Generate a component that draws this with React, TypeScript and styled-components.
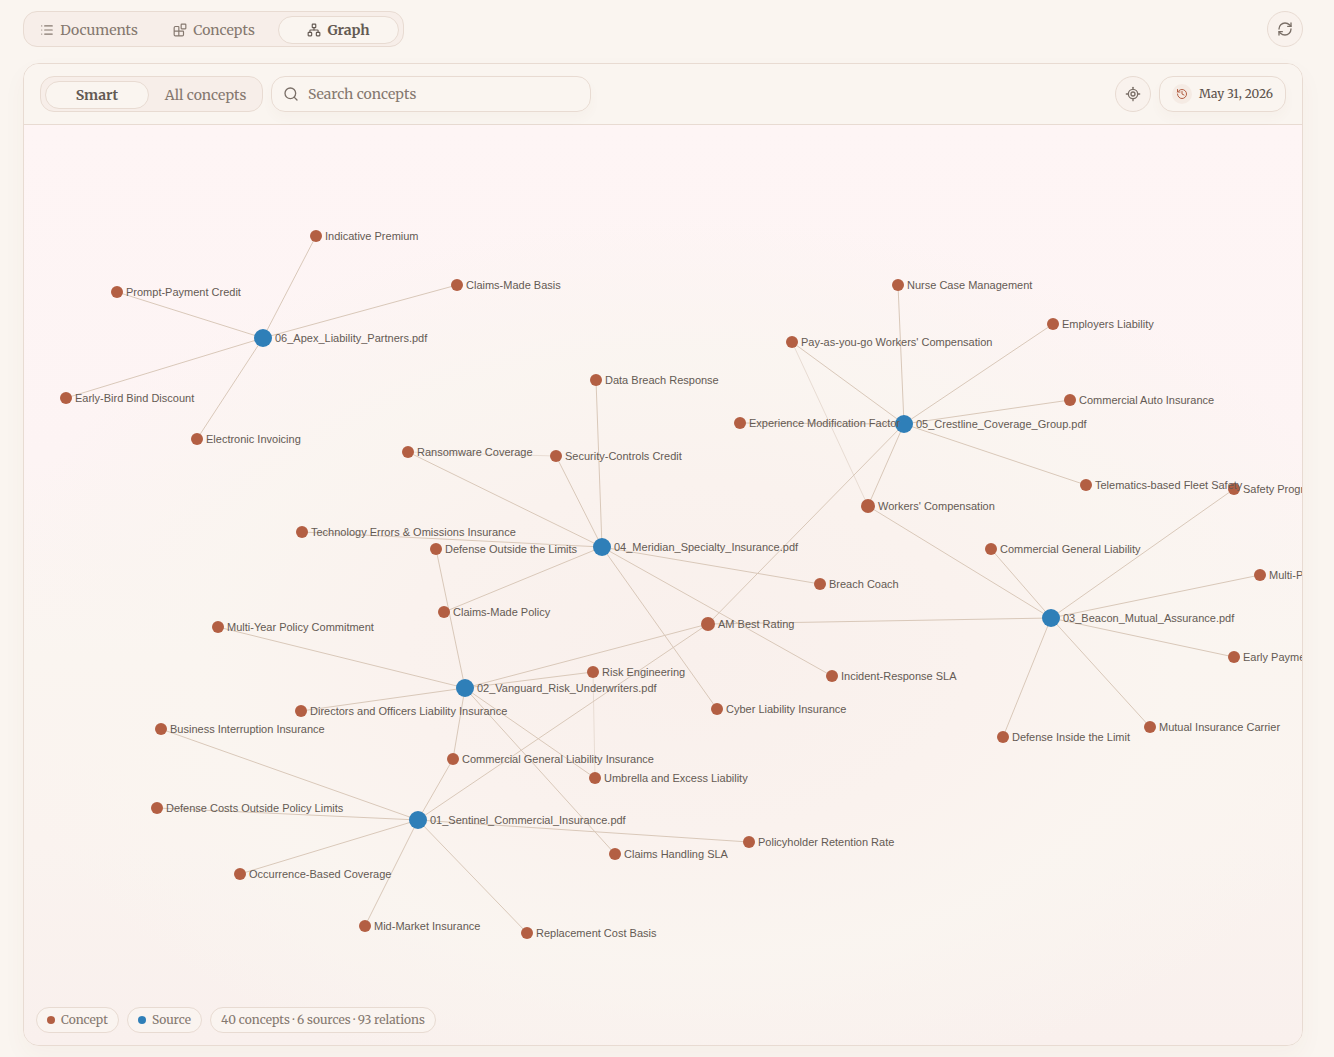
import React, { useId } from "react";
import styled, { createGlobalStyle, css } from "styled-components";
import { List, Blocks, Network, RefreshCw, Search, LocateFixed, History } from "lucide-react";

const serif = `Merriweather, "DejaVu Serif Condensed", "DejaVu Serif", serif`;

const GlobalStyle = createGlobalStyle`
  *, *::before, *::after { box-sizing: border-box; }
  html, body { margin: 0; height: 100%; }
  #root { height: 100%; }
  body {
    background: #faf5f0;
    color: #5c524b;
    font-family: ${serif};
    overflow: hidden;
  }
  button, input { font: inherit; color: inherit; margin: 0; }
`;

const Page = styled.main`
  display: flex;
  flex-direction: column;
  gap: 16px;
  height: 100vh;
  padding: 11px 31px 11px 23px;
`;

const TopBar = styled.header`
  display: flex;
  align-items: center;
  justify-content: space-between;
`;

const Segments = styled.nav`
  display: flex;
  align-items: center;
  gap: 4px;
  height: 36px;
  padding: 5px 4px 3px;
  border: 1px solid #e8dbd2;
  border-radius: 14px;
  background: #f7eee9;
`;

const Segment = styled.button<{ $active?: boolean; $width: number }>`
  display: flex;
  align-items: center;
  justify-content: center;
  gap: 6px;
  width: ${(p) => p.$width}px;
  height: 28px;
  padding: 0;
  border: 1px solid transparent;
  border-radius: 14px;
  background: transparent;
  color: #85786f;
  font-size: 14px;
  line-height: 20px;
  white-space: nowrap;
  cursor: pointer;
  ${(p) =>
    p.$active &&
    css`
      border-color: #e8dbd2;
      background: #faf5f0;
      color: #645a53;
      font-weight: 700;
    `}
`;

const RoundButton = styled.button`
  display: grid;
  place-items: center;
  width: 36px;
  height: 36px;
  padding: 0;
  border: 1px solid #e8dbd2;
  border-radius: 50%;
  background: #f9f2ed;
  color: #7a6f67;
  cursor: pointer;
`;

const Panel = styled.section`
  display: flex;
  flex: 1;
  flex-direction: column;
  min-height: 0;
  overflow: hidden;
  border: 1px solid #e8dbd2;
  border-radius: 16px;
  box-shadow: 0 10px 24px rgba(120, 80, 50, 0.04);
`;

const Toolbar = styled.div`
  display: flex;
  align-items: center;
  gap: 8px;
  padding: 12px 16px;
  border-bottom: 1px solid #e8dbd2;
  background: #faf5f0;
`;

const SearchBox = styled.label`
  display: flex;
  align-items: center;
  gap: 9px;
  width: 320px;
  height: 36px;
  margin-right: auto;
  padding: 0 11px;
  border: 1px solid #e8dbd2;
  border-radius: 14px;
  box-shadow: 0 6px 12px rgba(120, 80, 50, 0.03);
  color: #7a6f67;
`;

const SearchInput = styled.input`
  flex: 1;
  min-width: 0;
  padding: 0;
  border: 0;
  outline: 0;
  background: transparent;
  font-size: 14px;
  line-height: 20px;
  &::placeholder { color: #85786f; opacity: 1; }
`;

const DateButton = styled.button`
  display: flex;
  align-items: center;
  gap: 7px;
  height: 36px;
  padding: 0 12px;
  border: 1px solid #e8dbd2;
  border-radius: 14px;
  background: #faf5f0;
  box-shadow: 0 6px 12px rgba(120, 80, 50, 0.03);
  font-size: 12px;
  line-height: 20px;
  white-space: nowrap;
  cursor: pointer;
`;

const DateIcon = styled.span`
  display: grid;
  place-items: center;
  width: 20px;
  height: 20px;
  border-radius: 50%;
  background: #f5ebe4;
  color: #b35f43;
`;

const Canvas = styled.div`
  position: relative;
  flex: 1;
  min-height: 0;
  overflow: hidden;
  background:
    radial-gradient(ellipse 56% 48% at 52% 58%, #f9f0ec 0%, #faf2ee 40%, rgba(250, 245, 240, 0.9) 68%, rgba(250, 245, 240, 0) 100%),
    linear-gradient(180deg, #fef5f5 0%, #fdf4f4 36%, #faf5f0 58%, #faf3ef 78%, #f9f0ed 100%);
`;

const GraphSvg = styled.svg`
  display: block;
  width: 100%;
  height: 100%;
`;

const Edge = styled.line<{ $faint?: boolean }>`
  stroke: ${(p) => (p.$faint ? "#e8dcd3" : "#d9c8b9")};
  stroke-width: 1;
`;

const Dot = styled.circle<{ $source?: boolean }>`
  fill: ${(p) => (p.$source ? "#2f7fb8" : "#b35f43")};
`;

const NodeLabel = styled.text`
  fill: #645a53;
  font-family: Arial, "Liberation Sans", sans-serif;
  font-size: 11px;
`;

const Legend = styled.div`
  position: absolute;
  left: 12px;
  bottom: 12px;
  display: flex;
  gap: 8px;
`;

const Chip = styled.span`
  display: flex;
  align-items: center;
  gap: 6px;
  height: 26px;
  padding: 0 10px;
  border: 1px solid #e8dbd2;
  border-radius: 13px;
  background: #faf4f0;
  color: #85786f;
  font-size: 12px;
  line-height: 16px;
  white-space: nowrap;
`;

const Swatch = styled.i<{ $source?: boolean }>`
  width: 8px;
  height: 8px;
  border-radius: 50%;
  background: ${(p) => (p.$source ? "#2f7fb8" : "#b35f43")};
`;

type GraphNode = { id: string; label: string; x: number; y: number; r: number; source?: boolean };

const src = (id: string, label: string, x: number, y: number, r = 9): GraphNode => ({ id, label, x, y, r, source: true });
const con = (id: string, label: string, x: number, y: number, r = 6): GraphNode => ({ id, label, x, y, r });

const nodes: GraphNode[] = [
  src("s1", "01_Sentinel_Commercial_Insurance.pdf", 394, 695),
  src("s2", "02_Vanguard_Risk_Underwriters.pdf", 441, 563),
  src("s3", "03_Beacon_Mutual_Assurance.pdf", 1027, 493),
  src("s4", "04_Meridian_Specialty_Insurance.pdf", 578, 422),
  src("s5", "05_Crestline_Coverage_Group.pdf", 880, 299),
  src("s6", "06_Apex_Liability_Partners.pdf", 239, 213),
  con("premium", "Indicative Premium", 292, 111),
  con("prompt", "Prompt-Payment Credit", 93, 167),
  con("basis", "Claims-Made Basis", 433, 160),
  con("early", "Early-Bird Bind Discount", 42, 273),
  con("invoice", "Electronic Invoicing", 173, 314),
  con("nurse", "Nurse Case Management", 874, 160),
  con("employers", "Employers Liability", 1029, 199),
  con("payg", "Pay-as-you-go Workers' Compensation", 768, 217),
  con("auto", "Commercial Auto Insurance", 1046, 275),
  con("modfactor", "Experience Modification Factor", 716, 298),
  con("telematics", "Telematics-based Fleet Safety", 1062, 360),
  con("workers", "Workers' Compensation", 844, 381, 7),
  con("safety", "Safety Program Credit", 1210, 364),
  con("cgl", "Commercial General Liability", 967, 424),
  con("multipolicy", "Multi-Policy Discount", 1236, 450),
  con("earlypay", "Early Payment Discount", 1210, 532),
  con("mutual", "Mutual Insurance Carrier", 1126, 602),
  con("inside", "Defense Inside the Limit", 979, 612),
  con("breach", "Data Breach Response", 572, 255),
  con("ransom", "Ransomware Coverage", 384, 327),
  con("controls", "Security-Controls Credit", 532, 331),
  con("tech", "Technology Errors & Omissions Insurance", 278, 407),
  con("outside", "Defense Outside the Limits", 412, 424),
  con("policy", "Claims-Made Policy", 420, 487),
  con("coach", "Breach Coach", 796, 459),
  con("ambest", "AM Best Rating", 684, 499, 7),
  con("sla", "Incident-Response SLA", 808, 551),
  con("cyber", "Cyber Liability Insurance", 693, 584),
  con("multiyear", "Multi-Year Policy Commitment", 194, 502),
  con("risk", "Risk Engineering", 569, 547),
  con("dno", "Directors and Officers Liability Insurance", 277, 586),
  con("interrupt", "Business Interruption Insurance", 137, 604),
  con("cgli", "Commercial General Liability Insurance", 429, 634),
  con("umbrella", "Umbrella and Excess Liability", 571, 653),
  con("costs", "Defense Costs Outside Policy Limits", 133, 683),
  con("handling", "Claims Handling SLA", 591, 729),
  con("retention", "Policyholder Retention Rate", 725, 717),
  con("occurrence", "Occurrence-Based Coverage", 216, 749),
  con("midmarket", "Mid-Market Insurance", 341, 801),
  con("replacement", "Replacement Cost Basis", 503, 808),
];

const links: Record<string, string[]> = {
  s1: ["interrupt", "cgli", "costs", "retention", "occurrence", "midmarket", "replacement", "ambest"],
  s2: ["outside", "multiyear", "ambest", "risk", "dno", "cgli", "umbrella", "handling"],
  s3: ["workers", "safety", "cgl", "multipolicy", "earlypay", "mutual", "inside", "ambest"],
  s4: ["breach", "ransom", "controls", "tech", "policy", "coach", "sla", "cyber"],
  s5: ["nurse", "employers", "payg", "auto", "modfactor", "telematics", "workers", "ambest"],
  s6: ["premium", "prompt", "basis", "early", "invoice"],
};

const related: [string, string][] = [
  ["payg", "workers"],
  ["ransom", "controls"],
  ["risk", "umbrella"],
];

const byId = Object.fromEntries(nodes.map((n) => [n.id, n]));

function Link({ from, to, faint }: { from: string; to: string; faint?: boolean }) {
  const a = byId[from];
  const b = byId[to];
  return <Edge x1={a.x} y1={a.y} x2={b.x} y2={b.y} $faint={faint} />;
}

function ConceptGraph() {
  return (
    <GraphSvg role="img" aria-label="Concept graph">
      {related.map(([a, b]) => (
        <Link key={a + b} from={a} to={b} faint />
      ))}
      {Object.entries(links).flatMap(([s, list]) => list.map((c) => <Link key={s + c} from={s} to={c} />))}
      {nodes.map((n) => (
        <Dot key={n.id} cx={n.x} cy={n.y} r={n.r} $source={n.source} />
      ))}
      {nodes.map((n) => (
        <NodeLabel key={n.id} x={n.x + n.r + 3} y={n.y + 4}>
          {n.label}
        </NodeLabel>
      ))}
    </GraphSvg>
  );
}

export default function App() {
  const searchId = useId();
  return (
    <>
      <GlobalStyle />
      <Page>
        <TopBar>
          <Segments aria-label="Views">
            <Segment $width={122}><List size={14} />Documents</Segment>
            <Segment $width={120}><Blocks size={14} />Concepts</Segment>
            <Segment $width={121} $active><Network size={14} />Graph</Segment>
          </Segments>
          <RoundButton aria-label="Refresh"><RefreshCw size={16} /></RoundButton>
        </TopBar>
        <Panel>
          <Toolbar>
            <Segments aria-label="Concept filter">
              <Segment $width={104} $active>Smart</Segment>
              <Segment $width={105}>All concepts</Segment>
            </Segments>
            <SearchBox htmlFor={searchId}>
              <Search size={16} />
              <SearchInput id={searchId} aria-label="Search concepts" placeholder="Search concepts" />
            </SearchBox>
            <RoundButton aria-label="Center graph"><LocateFixed size={16} /></RoundButton>
            <DateButton>
              <DateIcon><History size={12} /></DateIcon>
              May 31, 2026
            </DateButton>
          </Toolbar>
          <Canvas>
            <ConceptGraph />
            <Legend>
              <Chip><Swatch />Concept</Chip>
              <Chip><Swatch $source />Source</Chip>
              <Chip>40 concepts · 6 sources · 93 relations</Chip>
            </Legend>
          </Canvas>
        </Panel>
      </Page>
    </>
  );
}
